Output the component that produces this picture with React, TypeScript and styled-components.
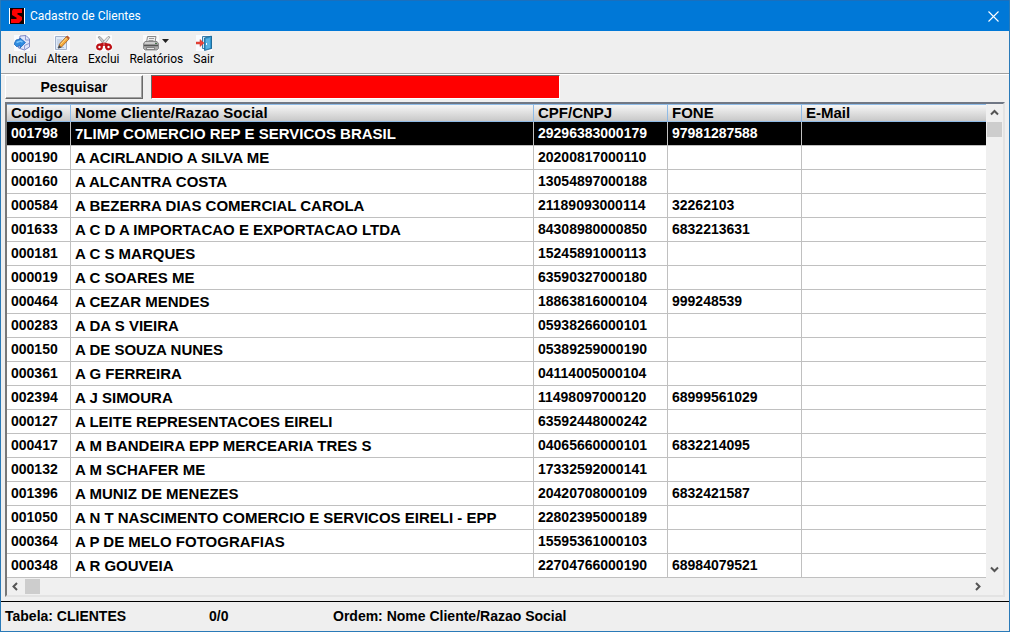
import React, { useState } from "react";
import styled, { createGlobalStyle } from "styled-components";

const GlobalStyle = createGlobalStyle`
  * { box-sizing: border-box; }
  body {
    margin: 0;
    background: #efefef;
    color: #000;
    font-family: "Liberation Sans", Arial, sans-serif;
  }
  button { padding: 0; border: 0; background: none; color: inherit; font: inherit; }
`;

const Window = styled.div`
  display: flex;
  flex-direction: column;
  min-height: 100vh;
  border: 1px solid #2a7ab8;
  border-top: 0;
  background: #efefef;
`;

const TitleBar = styled.header`
  display: flex;
  align-items: center;
  height: 31px;
  padding: 0 8px;
  border-top: 1px solid #1a6fbd;
  background: #0078d7;
  color: #fff;
`;

const Title = styled.h1`
  flex: 1;
  margin: 0 0 0 5px;
  font: 400 12px/16px Roboto, "Segoe UI", sans-serif;
`;

const CloseButton = styled.button`
  display: flex;
  align-items: center;
  justify-content: center;
  width: 16px;
  height: 28px;
`;

const Toolbar = styled.nav`
  display: flex;
  align-items: flex-start;
  gap: 10px;
  height: 43px;
  padding: 4px 7px 0;
  border-bottom: 1px solid #a0a0a0;
`;

const ToolButton = styled.button`
  display: flex;
  flex-direction: column;
  align-items: center;
  font: 400 12px/16px Roboto, Tahoma, sans-serif;
`;

const ToolIcon = styled.span`
  display: flex;
  align-items: center;
  gap: 3px;
  height: 16px;
`;

const SearchBar = styled.form`
  display: flex;
  gap: 8px;
  padding: 0 4px 3px;
  border-top: 1px solid #fff;
`;

const SearchButton = styled.button`
  width: 138px;
  height: 24px;
  border: 1px solid;
  border-color: #fff #696969 #696969 #fff;
  box-shadow: inset -1px -1px #a0a0a0;
  font-size: 14px;
  font-weight: 700;
`;

const SearchInput = styled.input`
  width: 41%;
  max-width: 409px;
  height: 24px;
  padding: 0 4px;
  border: 1px solid;
  border-color: #696969 #fff #fff #696969;
  border-radius: 0;
  outline: 0;
  background: #f00;
  color: #fff;
  font: 700 14px/20px "Liberation Sans", Arial, sans-serif;
`;

const Grid = styled.section`
  display: grid;
  grid-template-columns: minmax(0, 1fr) 17px;
  margin: 0 4px 4px;
  border: 2px solid;
  border-color: #707784 #e3e3e3 #e3e3e3 #777;
`;

const Table = styled.table`
  width: 100%;
  table-layout: fixed;
  border-collapse: separate;
  border-spacing: 0;
  background: #fff;
  text-rendering: optimizeLegibility;
`;

const Column = styled.col<{ $width?: number }>`
  width: ${(p) => (p.$width ? `${p.$width}px` : "auto")};
`;

const HeadCell = styled.th`
  height: 18px;
  padding: 0 4px;
  border: 0 solid #8fbbe6;
  border-width: 1px 1px 1px 0;
  background: linear-gradient(#f6f6f6, #c8c8c8);
  font-size: 15px;
  line-height: 16px;
  text-align: left;
  white-space: nowrap;
  &:last-child { border-right: 0; }
`;

const Row = styled.tr<{ $selected: boolean }>`
  background: ${(p) => (p.$selected ? "#000" : "#fff")};
  color: ${(p) => (p.$selected ? "#fff" : "#000")};
`;

const Cell = styled.td<{ $text: boolean }>`
  height: 24px;
  padding: 0 4px;
  border: 0 solid #c0c0c0;
  border-width: 0 1px 1px 0;
  font-size: ${(p) => (p.$text ? 15 : 14)}px;
  font-weight: 700;
  line-height: 23px;
  white-space: nowrap;
  overflow: hidden;
  &:last-child { border-right: 0; }
`;

const ScrollTrack = styled.div<{ $vertical?: boolean }>`
  display: flex;
  flex-direction: ${(p) => (p.$vertical ? "column" : "row")};
  background: #f0f0f0;
`;

const ScrollArrow = styled.button`
  display: flex;
  align-items: center;
  justify-content: center;
  width: 17px;
  height: 17px;
`;

const ScrollThumb = styled.div`
  width: 17px;
  height: 17px;
  border: 1px solid #f0f0f0;
  background: #cdcdcd;
`;

const ScrollSpace = styled.div`
  flex: 1;
`;

const StatusBar = styled.footer`
  display: grid;
  grid-template-columns: 204px 124px 1fr;
  flex: 1;
  min-height: 30px;
  padding: 6px 4px;
  border-top: 1px solid #000;
  font-size: 14px;
  font-weight: 700;
  line-height: 16px;
`;

const columns: { label: string; width?: number; text?: boolean }[] = [
  { label: "Codigo", width: 64 },
  { label: "Nome Cliente/Razao Social", width: 463, text: true },
  { label: "CPF/CNPJ", width: 134 },
  { label: "FONE", width: 134 },
  { label: "E-Mail" },
];

const clients = [
  ["001798", "7LIMP COMERCIO REP E SERVICOS BRASIL", "29296383000179", "97981287588"],
  ["000190", "A ACIRLANDIO A SILVA ME", "20200817000110", ""],
  ["000160", "A ALCANTRA COSTA", "13054897000188", ""],
  ["000584", "A BEZERRA DIAS COMERCIAL CAROLA", "21189093000114", "32262103"],
  ["001633", "A C D A IMPORTACAO E EXPORTACAO LTDA", "84308980000850", "6832213631"],
  ["000181", "A C S MARQUES", "15245891000113", ""],
  ["000019", "A C SOARES ME", "63590327000180", ""],
  ["000464", "A CEZAR MENDES", "18863816000104", "999248539"],
  ["000283", "A DA S VIEIRA", "05938266000101", ""],
  ["000150", "A DE SOUZA NUNES", "05389259000190", ""],
  ["000361", "A G FERREIRA", "04114005000104", ""],
  ["002394", "A J SIMOURA", "11498097000120", "68999561029"],
  ["000127", "A LEITE REPRESENTACOES EIRELI", "63592448000242", ""],
  ["000417", "A M BANDEIRA EPP MERCEARIA TRES S", "04065660000101", "6832214095"],
  ["000132", "A M SCHAFER ME", "17332592000141", ""],
  ["001396", "A MUNIZ DE MENEZES", "20420708000109", "6832421587"],
  ["001050", "A N T NASCIMENTO COMERCIO E SERVICOS EIRELI - EPP", "22802395000189", ""],
  ["000364", "A P DE MELO FOTOGRAFIAS", "15595361000103", ""],
  ["000348", "A R GOUVEIA", "22704766000190", "68984079521"],
];

const AppLogo = () => (
  <svg width="16" height="16" viewBox="0 0 16 16" aria-hidden="true">
    <rect width="16" height="16" fill="#fff" />
    <rect x="1" width="14" height="16" fill="#100000" />
    <path d="M4 1h9v4H9L8 6l5 3v3l-3 3H2v-4h5l1-1-5-3V3z" fill="#f00" />
  </svg>
);

const IncludeIcon = () => (
  <svg width="16" height="16" viewBox="0 0 16 16" aria-hidden="true">
    <rect width="16" height="16" fill="#fafcff" />
    <path d="M6 1l6-.5 3.500 3.500v8l-5 3-6-2z" fill="#dfe5fa" stroke="#7d86c4" />
    <path d="M11.500 1v4H15M10.500 14.500v-4l4.500-2" fill="none" stroke="#8e9bd4" />
    <path d="M6 3l5.500 4.500L6 13v-3L3 12 0 9l2-4 4-1z" fill="#2f8be0" stroke="#1560b4" strokeWidth=".7" />
    <path d="M2.500 7.500l4-1.500 2 1" fill="none" stroke="#7cc4f8" strokeWidth="1.500" />
  </svg>
);

const EditIcon = () => (
  <svg width="16" height="16" viewBox="0 0 16 16" aria-hidden="true">
    <rect width="16" height="16" fill="#fafcff" />
    <path d="M1.500 1.500h11v13h-11z" fill="#dfeaf8" stroke="#a4b3cc" />
    <path d="M3 5h5M3 7h4M3 9h2M3 12.500h7" stroke="#b2c2d9" />
    <path d="M4.500 13l1-4 7-7.500 2.500 2.500-7.500 8z" fill="#f5a93b" stroke="#9b5a1c" strokeWidth=".8" />
    <path d="M6.500 9.500l6-6.500" stroke="#ffdf8c" />
    <path d="M12 2l1.500-1.500L16 3l-1.500 1.500z" fill="#b95c35" />
    <path d="M4 13.500l1-3.500 2.500 2.500z" fill="#37475a" />
  </svg>
);

const DeleteIcon = () => (
  <svg width="16" height="16" viewBox="0 0 16 16" aria-hidden="true">
    <rect width="16" height="16" fill="#fcfcfc" />
    <path d="M2 2l2-.5 6.500 7L8 10z" fill="#c7c7c7" stroke="#777" strokeWidth=".6" />
    <path d="M14 2l-2-.5-6.500 7L8 10z" fill="#e7e7e7" stroke="#777" strokeWidth=".6" />
    <path d="M4 8.500l4-1 4 1 2 2-4 1-2-1-2 1-4-1z" fill="#bd1015" />
    <ellipse cx="3.500" cy="12" rx="2.300" ry="2.300" transform="rotate(25 3.500 12)" fill="#fff" stroke="#bd1015" strokeWidth="2.200" />
    <ellipse cx="12.500" cy="12" rx="2.300" ry="2.300" transform="rotate(-25 12.500 12)" fill="#fff" stroke="#bd1015" strokeWidth="2.200" />
    <circle cx="8" cy="9" r=".8" fill="#e6a0a0" />
  </svg>
);

const PrintIcon = () => (
  <svg width="16" height="16" viewBox="0 0 16 16" aria-hidden="true">
    <rect width="16" height="16" fill="#fafafa" />
    <path d="M4.500 1.500h8.500l-1 6H3.500z" fill="#eee" stroke="#888" />
    <path d="M6 3.500h5M5.500 5.500h5" stroke="#999" />
    <path d="M2 6.500h12l1.500 2v5L14 15H2L.5 13.500v-5z" fill="#aaa" stroke="#777" strokeWidth=".8" />
    <path d="M2 8h10" stroke="#eee" />
    <path d="M1 10.500h14" stroke="#555" strokeWidth="1.500" />
    <path d="M3.500 12.500h8v2h-8z" fill="#e4e4e4" stroke="#666" strokeWidth=".7" />
    <path d="M12 8.500h2" stroke="#47734c" />
  </svg>
);

const MenuArrow = () => (
  <svg width="7" height="12" viewBox="0 0 7 12" aria-hidden="true">
    <path d="M0 2h7L3.500 6z" fill="#222" />
  </svg>
);

const ExitIcon = () => (
  <svg width="16" height="16" viewBox="0 0 16 16" aria-hidden="true">
    <rect width="16" height="16" fill="#fafcff" />
    <path d="M6.500 1.500h9v12h-9z" fill="#cfe7f7" stroke="#3a7eac" />
    <path d="M8.500 3l7-2v12.500l-7 2z" fill="#3097d1" stroke="#1b638f" strokeWidth=".8" />
    <path d="M10 4l4-1v10l-4 1z" fill="#58b2e2" />
    <path d="M10.500 8v2" stroke="#fff" />
    <path d="M0 7h4V4.500L8 8l-4 3.500V9H0z" fill="#ee4438" stroke="#c5372e" strokeWidth=".5" />
  </svg>
);

const Chevron = ({ d }: { d: string }) => (
  <svg width="9" height="9" viewBox="0 0 9 9" aria-hidden="true">
    <path d={d} fill="none" stroke="#555" strokeWidth="2" />
  </svg>
);

export default function App() {
  const [selected, setSelected] = useState("001798");
  const [query, setQuery] = useState("");

  return (
    <>
      <GlobalStyle />
      <Window>
        <TitleBar>
          <AppLogo />
          <Title>Cadastro de Clientes</Title>
          <CloseButton aria-label="Fechar">
            <svg width="11" height="11" viewBox="0 0 11 11" aria-hidden="true">
              <path d="M.5.5l10 10M10.500.5l-10 10" stroke="#fff" strokeWidth="1.100" />
            </svg>
          </CloseButton>
        </TitleBar>
        <Toolbar>
          <ToolButton><ToolIcon><IncludeIcon /></ToolIcon>Inclui</ToolButton>
          <ToolButton><ToolIcon><EditIcon /></ToolIcon>Altera</ToolButton>
          <ToolButton><ToolIcon><DeleteIcon /></ToolIcon>Exclui</ToolButton>
          <ToolButton><ToolIcon><PrintIcon /><MenuArrow /></ToolIcon>Relatórios</ToolButton>
          <ToolButton><ToolIcon><ExitIcon /></ToolIcon>Sair</ToolButton>
        </Toolbar>
        <SearchBar onSubmit={(e) => e.preventDefault()}>
          <SearchButton type="submit">Pesquisar</SearchButton>
          <SearchInput aria-label="Pesquisar" value={query} onChange={(e) => setQuery(e.target.value)} />
        </SearchBar>
        <Grid>
          <Table>
            <colgroup>
              {columns.map((c) => <Column key={c.label} $width={c.width} />)}
            </colgroup>
            <thead>
              <tr>{columns.map((c) => <HeadCell key={c.label} scope="col">{c.label}</HeadCell>)}</tr>
            </thead>
            <tbody>
              {clients.map((client) => (
                <Row key={client[0]} $selected={client[0] === selected} onClick={() => setSelected(client[0])}>
                  {columns.map((c, i) => <Cell key={c.label} $text={!!c.text}>{client[i]}</Cell>)}
                </Row>
              ))}
            </tbody>
          </Table>
          <ScrollTrack $vertical>
            <ScrollArrow aria-label="Rolar para cima"><Chevron d="M1 6.500l3.500-3.500L8 6.500" /></ScrollArrow>
            <ScrollThumb />
            <ScrollSpace />
            <ScrollArrow aria-label="Rolar para baixo"><Chevron d="M1 2.500L4.500 6 8 2.500" /></ScrollArrow>
          </ScrollTrack>
          <ScrollTrack>
            <ScrollArrow aria-label="Rolar para a esquerda"><Chevron d="M6 1L2.500 4.500 6 8" /></ScrollArrow>
            <ScrollThumb />
            <ScrollSpace />
            <ScrollArrow aria-label="Rolar para a direita"><Chevron d="M3 1l3.500 3.500L3 8" /></ScrollArrow>
          </ScrollTrack>
          <ScrollTrack />
        </Grid>
        <StatusBar>
          <span>Tabela: CLIENTES</span>
          <span>0/0</span>
          <span>Ordem: Nome Cliente/Razao Social</span>
        </StatusBar>
      </Window>
    </>
  );
}
